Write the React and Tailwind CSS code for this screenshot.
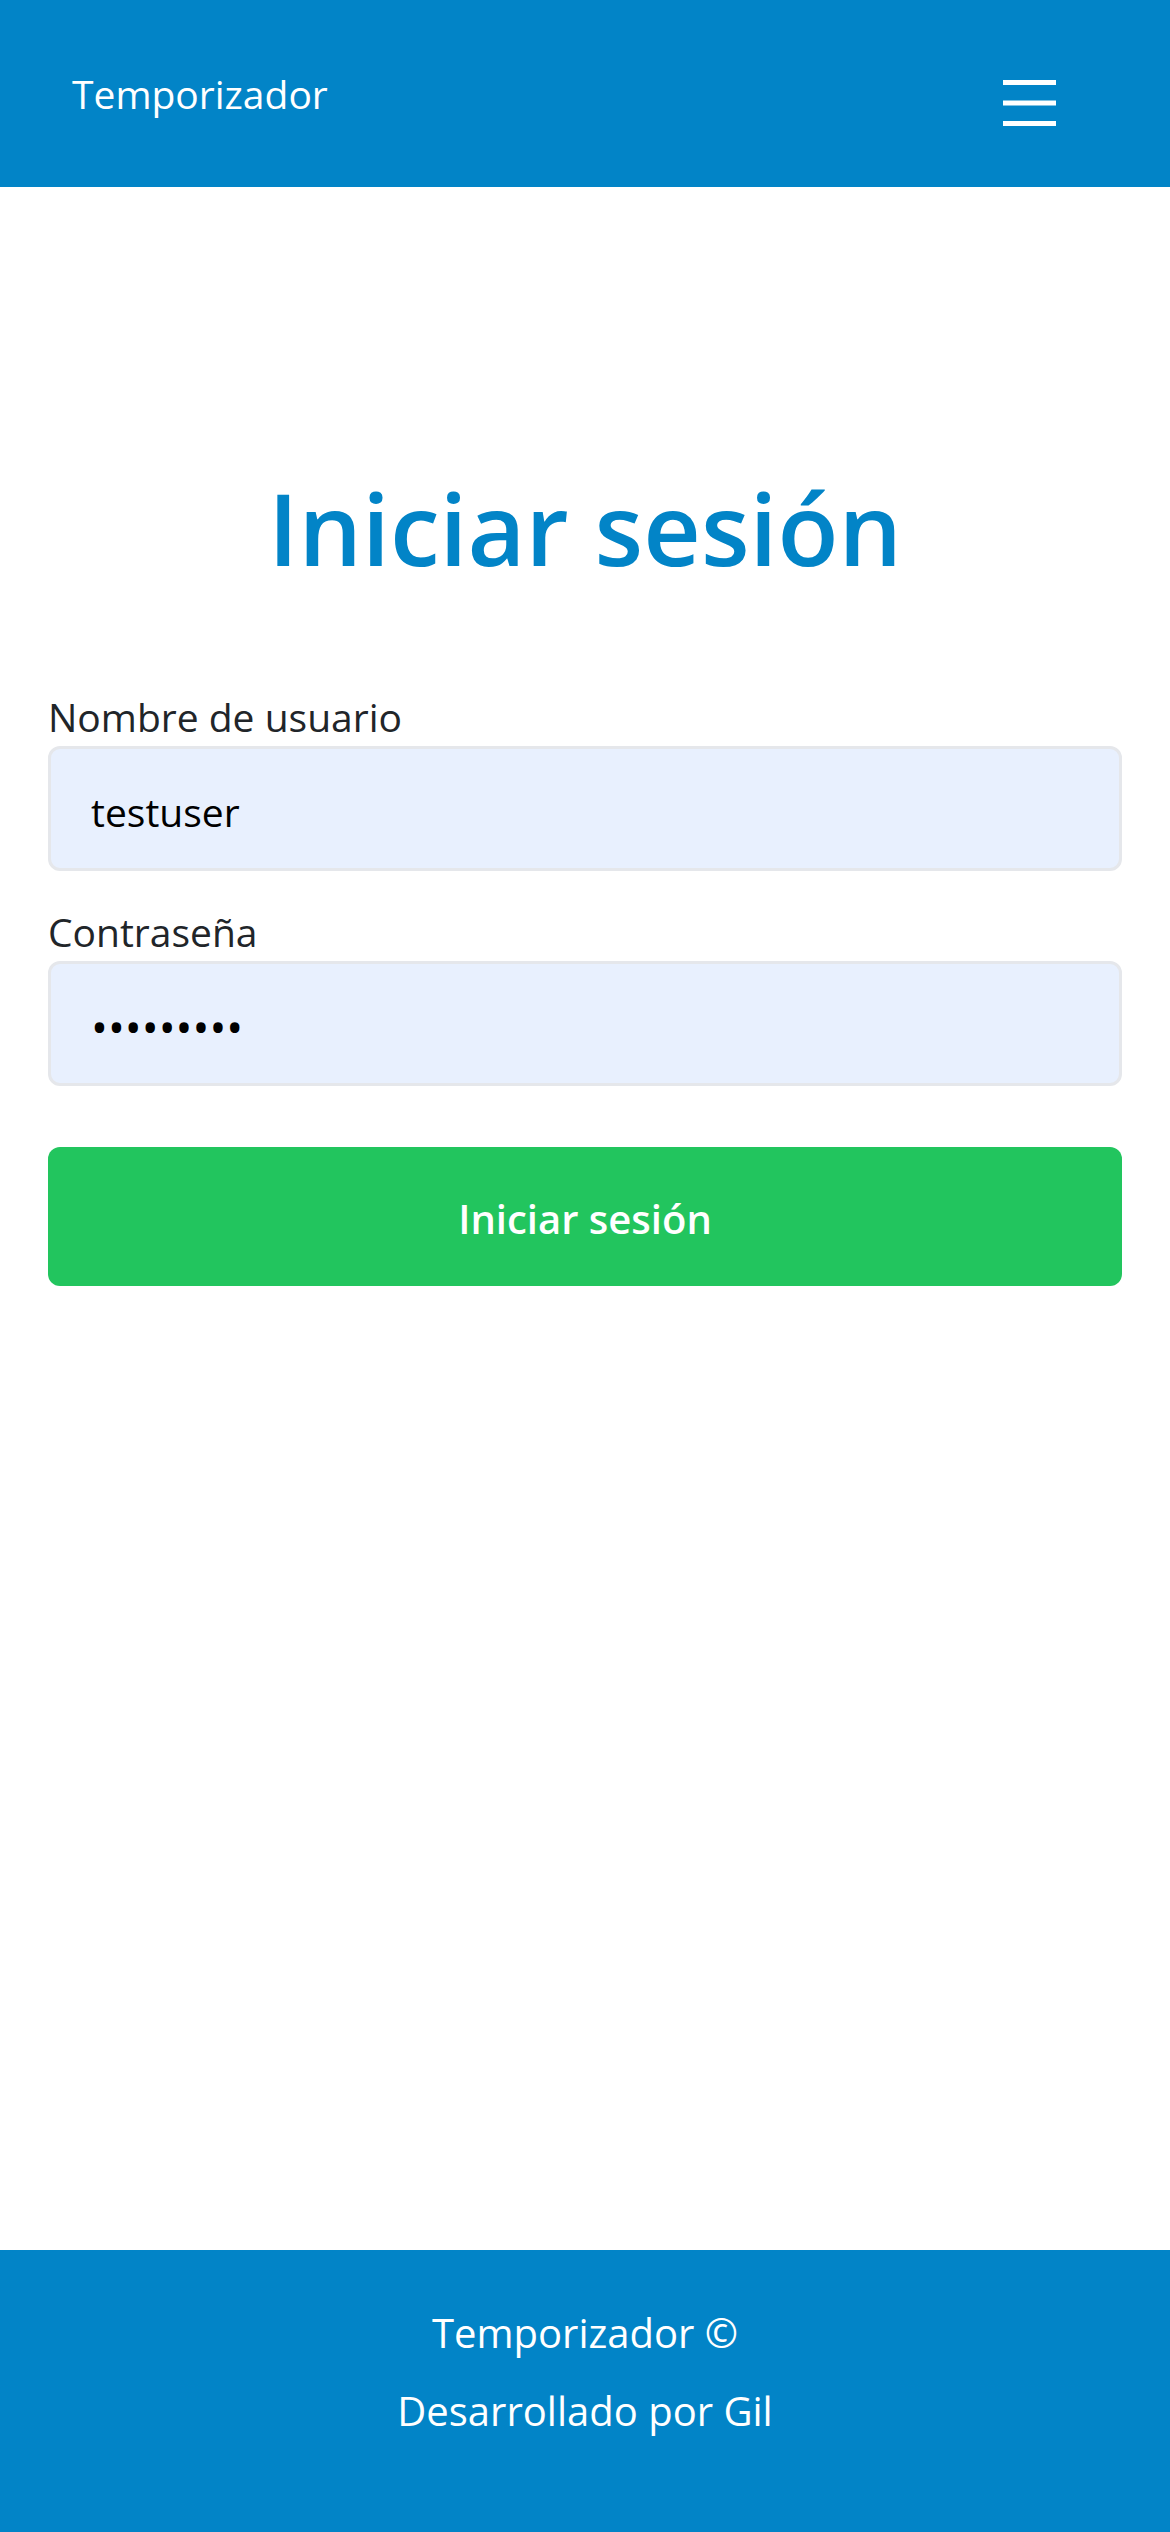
import React from 'react';

// Pantalla de inicio de sesión del Temporizador
function Header() {
	return (
		<header className="h-[187px] bg-[#0284c7] flex items-center justify-between pl-[72px] pr-[114px]">
			<span className="text-white text-[39px] leading-none">Temporizador</span>
			<button className="mt-[18px]" aria-label="Menú">
				<svg width="53" height="46" viewBox="0 0 53 46" fill="#ffffff">
					<rect x="0" y="0" width="53" height="5" />
					<rect x="0" y="20.5" width="53" height="5" />
					<rect x="0" y="41" width="53" height="5" />
				</svg>
			</button>
		</header>
	);
}

function Field({ label, type, value, inputSize }) {
	return (
		<div className="flex flex-col">
			<label className="text-[39px] leading-[59px] text-[#212529]">{label}</label>
			<input
				type={type}
				value={value}
				readOnly
				className={`h-[125px] w-full rounded-[12px] border-[3px] border-[#e5e7eb] bg-[#e8f0fe] pl-[40px] pt-[6px] text-black outline-none ${inputSize}`}
			/>
		</div>
	);
}

export default function App() {
	return (
		<div className="min-h-[2532px] flex flex-col bg-white" style={{ fontFamily: '"Open Sans", "Noto Sans", sans-serif' }}>
			<Header />

			<main className="flex-1 px-[48px] pt-[269px]">
				<h1 className="text-center text-[100px] leading-[142px] font-semibold text-[#0284c7]">Iniciar sesión</h1>

				<form className="mt-[89px] flex flex-col" onSubmit={(e) => e.preventDefault()}>
					<Field label="Nombre de usuario" type="text" value="testuser" inputSize="text-[39px]" />
					<div className="mt-[31px]">
						<Field label="Contraseña" type="password" value="123456789" inputSize="text-[45px]" />
					</div>
					<button
						type="submit"
						className="mt-[61px] h-[139px] w-full rounded-[12px] bg-[#22c55e] pt-[4px] text-white text-[40px] font-semibold"
					>
						Iniciar sesión
					</button>
				</form>
			</main>

			{/* Pie de página */}
			<footer className="h-[282px] bg-[#0284c7] pt-[44px] text-center text-white text-[40px] leading-[78px]">
				<p>Temporizador ©</p>
				<p>Desarrollado por Gil</p>
			</footer>
		</div>
	);
}
